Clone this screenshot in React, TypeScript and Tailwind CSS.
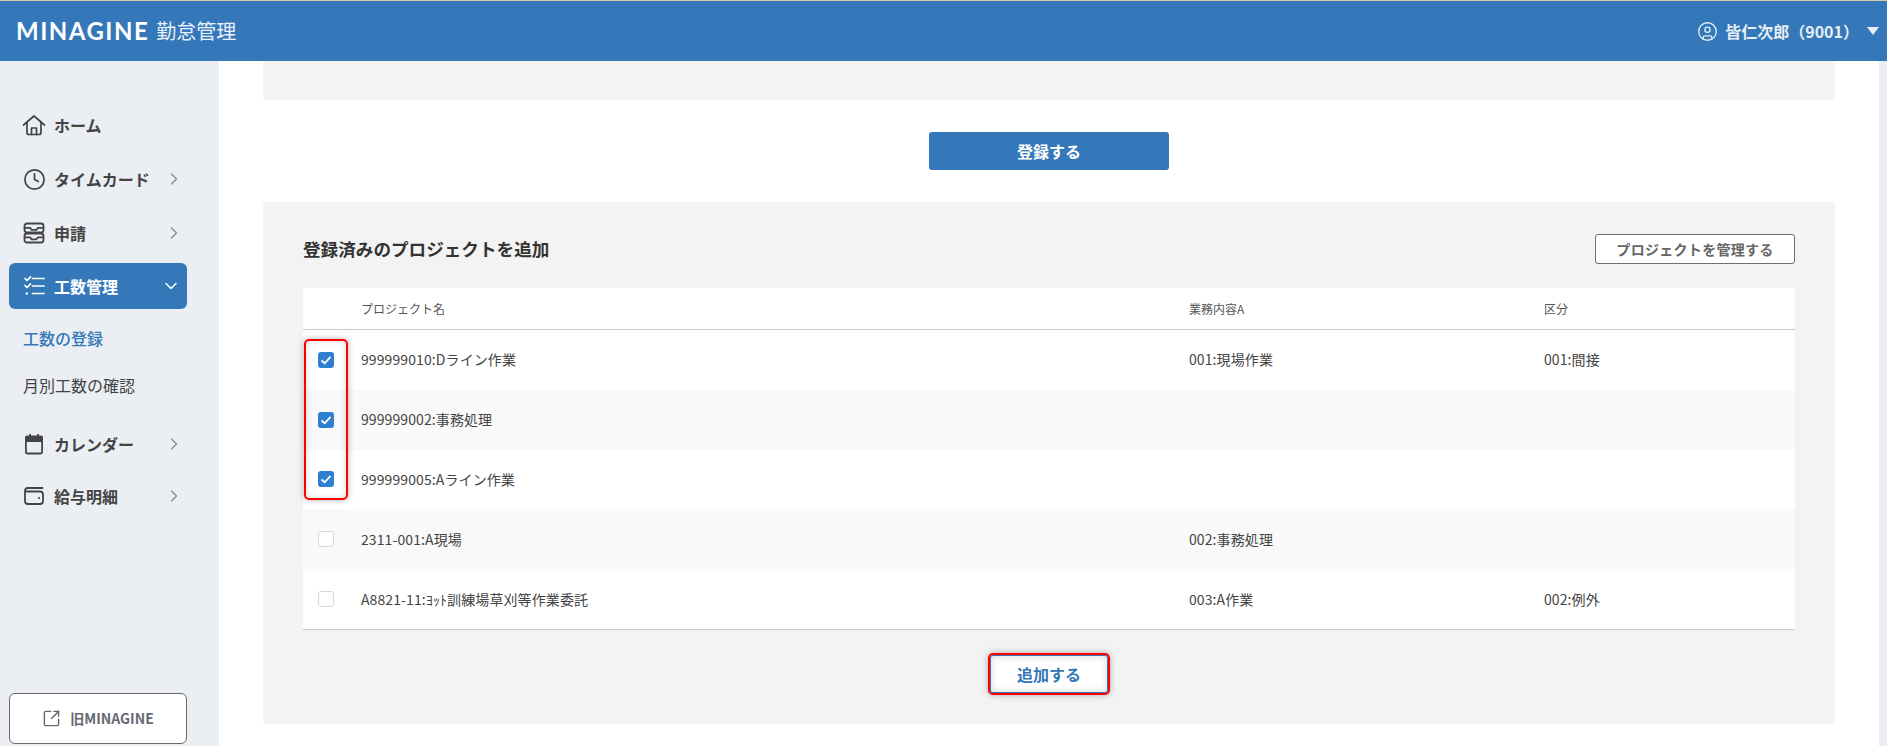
import { ChevronDown, ChevronRight, Clock, SquareArrowOutUpRight, CircleUser } from 'lucide-react';

const rows = [
  { name: '999999010:Dライン作業', work: '001:現場作業', kind: '001:間接', checked: true },
  { name: '999999002:事務処理', work: '', kind: '', checked: true },
  { name: '999999005:Aライン作業', work: '', kind: '', checked: true },
  { name: '2311-001:A現場', work: '002:事務処理', kind: '', checked: false },
  { name: 'A8821-11:ﾖｯﾄ訓練場草刈等作業委託', work: '003:A作業', kind: '002:例外', checked: false },
];

function HomeIcon() {
  return (
    <svg viewBox="0 0 24 24" className="w-[24px] h-[24px]" fill="none" stroke="currentColor" strokeWidth="1.700" strokeLinecap="round" strokeLinejoin="round">
      <path d="M1.500 12 12 3l10.500 9" />
      <path d="M5 9.500V19.500a2 2 0 0 0 2 2h10a2 2 0 0 0 2-2V9.500" />
      <path d="M9.500 21.500V15h5v6.500" />
    </svg>
  );
}

function TrayIcon() {
  return (
    <svg viewBox="0 0 24 24" className="w-[24px] h-[24px]" fill="none" stroke="currentColor" strokeWidth="1.800" strokeLinejoin="round">
      <rect x="2.500" y="2.500" width="19" height="9" rx="2.500" />
      <path d="M2.500 6.800H8L9.500 8.800H14.500L16 6.800H21.500" />
      <rect x="2.500" y="12.500" width="19" height="9" rx="2.500" />
      <path d="M2.500 16.300H8L9.500 18.300H14.500L16 16.300H21.500" />
    </svg>
  );
}

function TaskIcon() {
  return (
    <svg viewBox="0 0 24 24" className="w-[24px] h-[24px]" fill="none" stroke="currentColor" strokeWidth="1.700" strokeLinecap="round" strokeLinejoin="round">
      <path d="M10.500 4.500H22M10.500 12H22M10.500 19.500H22" />
      <path d="M3 4.500 5 6.500 8.500 2.800M3 11.500 5 13.500 8.500 9.800" />
      <circle cx="4.800" cy="19.500" r="1.200" fill="currentColor" stroke="none" />
    </svg>
  );
}

function CalendarIcon() {
  return (
    <svg viewBox="0 0 24 24" className="w-[24px] h-[24px]" fill="none" stroke="currentColor" strokeWidth="1.800">
      <rect x="3.900" y="4.500" width="16.200" height="17" rx="1.500" />
      <path d="M4 5.500h16V9H4Z" fill="currentColor" />
      <path d="M8 2v3M16 2v3" />
    </svg>
  );
}

function WalletIcon() {
  return (
    <svg viewBox="0 0 24 24" className="w-[24px] h-[24px]" fill="none" stroke="currentColor" strokeWidth="1.800" strokeLinecap="round">
      <path d="M20.500 4H6a3 3 0 0 0-3 3v10a3 3 0 0 0 3 3h12a3 3 0 0 0 3-3V10.500a3 3 0 0 0-3-3H3.500" />
      <circle cx="17" cy="14" r="1.100" fill="currentColor" stroke="none" />
    </svg>
  );
}

function NavItem({ icon, label, arrow = true }: { icon: React.ReactNode; label: string; arrow?: boolean }) {
  return (
    <div className="h-[46px] ml-[9px] mr-[32px] pl-[13px] pr-[3px] flex items-center text-[#444444]">
      <span className="w-[24px] flex justify-center shrink-0">{icon}</span>
      <span className="ml-[8px] flex-1 text-[16px] font-bold">{label}</span>
      {arrow && <ChevronRight className="w-[20px] h-[20px] text-[#8a8a8a]" strokeWidth={1.500} />}
    </div>
  );
}

function Checkbox({ checked }: { checked: boolean }) {
  return checked ? (
    <span className="w-[16px] h-[16px] rounded-[3px] bg-[#2f7fd0] flex items-center justify-center">
      <svg viewBox="0 0 16 16" className="w-[16px] h-[16px]" fill="none" stroke="white" strokeWidth="1.800">
        <path d="M3.500 8.500 6.700 11.300 12.500 4.800" />
      </svg>
    </span>
  ) : (
    <span className="w-[16px] h-[16px] rounded-[3px] bg-white border border-[#d5d8e0]" />
  );
}

export default function App() {
  return (
    <div className="h-[746px] overflow-hidden flex flex-col bg-white text-[#333333] font-['Noto_Sans_CJK_JP','Noto_Sans',sans-serif]">
      {/* Header */}
      <header className="h-[61px] shrink-0 bg-[#3478b9] border-t border-[#d8c8a8] flex items-center pl-[16px] pr-[8px] text-white">
        <span className="font-['Lato',sans-serif] text-[24px] font-bold tracking-[1.500px] leading-none">MINAGINE</span>
        <span className="ml-[7px] text-[20px] text-[#e8f0f8]">勤怠管理</span>
        <div className="ml-auto flex items-center">
          <CircleUser className="w-[21px] h-[21px] text-[#e6eef6]" strokeWidth={1.500} />
          <span className="ml-[7px] text-[16px] font-bold text-[#e6eef6]">皆仁次郎（9001）</span>
          <span className="ml-[8px] w-0 h-0 border-l-[6.500px] border-r-[6.500px] border-t-[8px] border-l-transparent border-r-transparent border-t-[#e6eef6]" />
        </div>
      </header>

      <div className="flex-1 flex min-h-0">
        {/* Sidebar */}
        <aside className="w-[219px] shrink-0 bg-[#ebeef3] flex flex-col pt-[41px]">
          <NavItem icon={<HomeIcon />} label="ホーム" arrow={false} />
          <div className="h-[8px]" />
          <NavItem icon={<Clock className="w-[23px] h-[23px]" strokeWidth={1.800} />} label="タイムカード" />
          <div className="h-[8px]" />
          <NavItem icon={<TrayIcon />} label="申請" />
          <div className="h-[7px]" />
          <div className="h-[46px] ml-[9px] mr-[32px] pl-[13px] pr-[6px] rounded-[6px] bg-[#3478b9] text-white flex items-center">
            <span className="w-[24px] flex justify-center"><TaskIcon /></span>
            <span className="ml-[8px] flex-1 text-[16px] font-bold">工数管理</span>
            <ChevronDown className="w-[20px] h-[20px]" strokeWidth={1.800} />
          </div>
          <div className="h-[47px] mt-[5px] pl-[23px] flex items-center text-[16px] font-medium text-[#3478b9]">工数の登録</div>
          <div className="h-[47px] pl-[23px] flex items-center text-[16px] text-[#444444]">月別工数の確認</div>
          <div className="h-[13px]" />
          <NavItem icon={<CalendarIcon />} label="カレンダー" />
          <div className="h-[6px]" />
          <NavItem icon={<WalletIcon />} label="給与明細" />
          <div className="mt-auto mb-[2px] ml-[9px] mr-[32px] h-[51px] bg-white border border-[#6a6a6a] rounded-[6px] flex items-center justify-center text-[#666a73]">
            <SquareArrowOutUpRight className="w-[19px] h-[19px]" strokeWidth={1.800} />
            <span className="ml-[9px] text-[14px] font-bold">旧MINAGINE</span>
          </div>
        </aside>

        {/* Main */}
        <main className="flex-1 min-w-0 px-[44px] flex flex-col">
          <div className="h-[39px] bg-[#f3f3f3] rounded-b-[4px]" />

          <div className="mt-[32px] flex justify-center">
            <button className="w-[240px] h-[38px] bg-[#3478b9] rounded-[3px] text-white text-[16px] font-bold">登録する</button>
          </div>

          <section className="mt-[32px] h-[522px] bg-[#f3f3f3] rounded-[4px] px-[40px] pt-[32px]">
            <div className="h-[30px] flex items-center justify-between">
              <h2 className="text-[17.600px] font-bold text-[#333333]">登録済みのプロジェクトを追加</h2>
              <button className="w-[200px] h-[30px] bg-white border border-[#6f6f6f] rounded-[3px] text-[#666666] text-[14px] font-bold tracking-[0.3px]">プロジェクトを管理する</button>
            </div>

            <div className="relative mt-[24px]">
              <div className="h-[42px] bg-white border-b border-[#c9c9c9] flex items-center text-[12px] text-[#555555]">
                <div className="w-[58px]" />
                <div className="w-[828px]">プロジェクト名</div>
                <div className="w-[355px]">業務内容A</div>
                <div>区分</div>
              </div>
              {rows.map((row, i) => (
                <div key={row.name} className={`h-[59.800px] flex items-center text-[14px] tracking-[0.1px] text-[#444444] ${i % 2 === 1 ? 'bg-[#f9f9f9]' : 'bg-white'}`}>
                  <div className="w-[58px] pl-[15px] flex items-center"><Checkbox checked={row.checked} /></div>
                  <div className="w-[828px]">{row.name}</div>
                  <div className="w-[355px]">{row.work}</div>
                  <div>{row.kind}</div>
                </div>
              ))}
              <div className="border-b border-[#c9c9c9]" />
              {/* red highlight over the checked rows */}
              <div className="absolute left-[1px] top-[51px] w-[44px] h-[161px] border-2 border-[#ff0000] rounded-[5px] shadow-[0_0_6px_rgba(0,0,0,0.3),inset_0_0_6px_rgba(0,0,0,0.15)]" />
            </div>

            <div className="mt-[23px] flex justify-center">
              <button className="w-[122px] h-[42px] bg-white border-2 border-[#ff0000] rounded-[5px] text-[#3478b9] text-[16px] font-bold shadow-[0_0_6px_rgba(0,0,0,0.3),inset_0_0_0_1px_#3478b9,inset_0_0_6px_3px_rgba(0,0,0,0.1)]">追加する</button>
            </div>
          </section>
        </main>

        <div className="w-[8px] shrink-0 bg-[#ebeef3]" />
      </div>
    </div>
  );
}
